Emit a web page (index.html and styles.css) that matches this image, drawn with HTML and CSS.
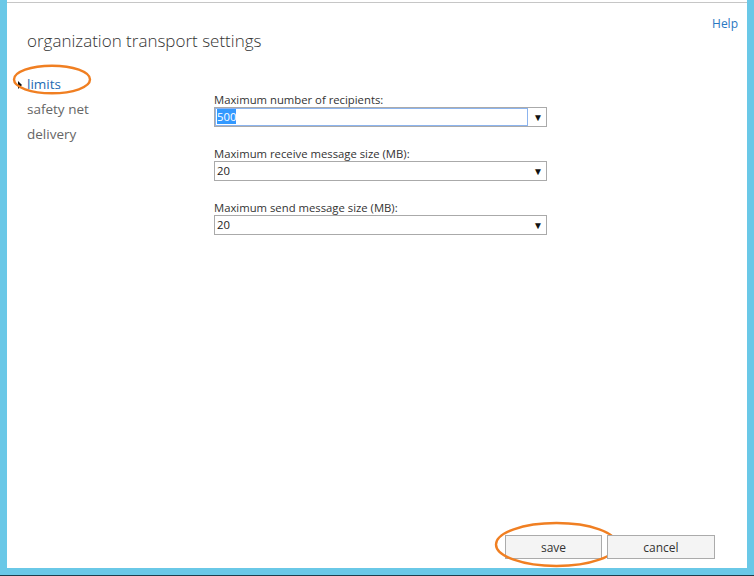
FILE: index.html
```html
<!DOCTYPE html>
<html>
<head>
<meta charset="utf-8">
<title>organization transport settings</title>
<link rel="stylesheet" href="styles.css">
</head>
<body>
  <div class="dialog">
    <div class="topline"></div>
    <div class="header">
      <a class="help" href="#">Help</a>
    </div>
    <h1 class="title">organization transport settings</h1>

    <div class="body">
      <ul class="nav">
        <li class="nav-item active">
          <span class="caret"></span>limits
          <svg class="mark mark-nav" width="80" height="31" viewBox="0 0 80 31">
            <ellipse cx="40" cy="15.5" rx="38" ry="13.8" fill="none" stroke="#f07f22" stroke-width="2.4"/>
          </svg>
        </li>
        <li class="nav-item">safety net</li>
        <li class="nav-item">delivery</li>
      </ul>

      <div class="form">
        <div class="field">
          <label class="field-label">Maximum number of recipients:</label>
          <div class="combo">
            <div class="combo-input focused"><span class="selected">500</span></div>
            <span class="combo-arrow">&#9660;</span>
          </div>
        </div>
        <div class="field">
          <label class="field-label">Maximum receive message size (MB):</label>
          <div class="combo">
            <div class="combo-input">20</div>
            <span class="combo-arrow">&#9660;</span>
          </div>
        </div>
        <div class="field">
          <label class="field-label">Maximum send message size (MB):</label>
          <div class="combo">
            <div class="combo-input">20</div>
            <span class="combo-arrow">&#9660;</span>
          </div>
        </div>
      </div>
    </div>

    <div class="actions">
      <button class="btn btn-save">save
        <svg class="mark mark-save" width="125" height="47" viewBox="0 0 125 47">
          <ellipse cx="62.5" cy="23.5" rx="60.5" ry="21.5" fill="none" stroke="#f07f22" stroke-width="2.4"/>
        </svg>
      </button>
      <button class="btn">cancel</button>
    </div>
  </div>
</body>
</html>
```

FILE: styles.css
```css
html, body {
  margin: 0;
  padding: 0;
}

body {
  height: 575px;
  background: #6ac8e7;
  border-bottom: 1px solid #1e3d4b;
  overflow: hidden;
  font-family: "Open Sans", "Noto Sans", sans-serif;
  color: #333;
}

.dialog {
  position: relative;
  margin-left: 7px;
  width: 740px;
  height: 568px;
  background: #fff;
  display: flex;
  flex-direction: column;
}

.topline {
  margin-top: 2px;
  height: 1px;
  background: #c6c6c6;
}

.header {
  display: flex;
  justify-content: flex-end;
  padding: 12px 9px 0 0;
  height: 20px;
}

.help {
  font-size: 12px;
  color: #2a78c2;
  text-decoration: none;
}

.title {
  margin: -6px 0 0 20px;
  font-size: 17px;
  font-weight: 300;
  color: #333;
  line-height: 24px;
}

.body {
  display: flex;
  margin-top: 19px;
  flex: 1;
}

.nav {
  list-style: none;
  margin: 0;
  padding: 0 0 0 20px;
  width: 187px;
}

.nav-item {
  position: relative;
  font-size: 13.5px;
  line-height: 25px;
  color: #666;
}

.nav-item.active {
  color: #1f6bb3;
}

.caret {
  position: absolute;
  left: -9px;
  top: 9px;
  width: 0;
  height: 0;
  border-top: 4px solid transparent;
  border-bottom: 4px solid transparent;
  border-left: 4px solid #111;
}

.mark {
  position: absolute;
  pointer-events: none;
}

.mark-nav {
  left: -15px;
  top: -8px;
}

.form {
  padding-top: 20px;
  width: 333px;
}

.field {
  margin-bottom: 19px;
}

.field-label {
  display: block;
  font-size: 11.3px;
  line-height: 15px;
  color: #333;
}

.combo {
  display: flex;
  align-items: stretch;
  height: 18px;
  border: 1px solid #aaa;
  background: #fff;
}

.combo-input {
  flex: 1;
  font-size: 11.3px;
  line-height: 18px;
  padding-left: 2px;
  color: #222;
}

.combo-input.focused {
  border: 1px solid #8cb4ee;
  line-height: 16px;
  padding-left: 1px;
  margin-right: 2px;
}

.selected {
  background: #3399ff;
  color: #fff;
}

.combo-arrow {
  width: 16px;
  font-size: 10px;
  line-height: 18px;
  text-align: center;
  color: #111;
}

.actions {
  display: flex;
  justify-content: flex-end;
  gap: 5px;
  padding: 0 32px 9px 0;
}

.btn {
  position: relative;
  height: 24px;
  font-family: "Open Sans", "Noto Sans", sans-serif;
  font-size: 12px;
  color: #333;
  background: #f4f4f4;
  border: 1px solid #ababab;
  padding: 0;
}

.btn-save {
  width: 97px;
}

.btn + .btn {
  width: 108px;
}

.mark-save {
  left: -12px;
  top: -15px;
}
```
